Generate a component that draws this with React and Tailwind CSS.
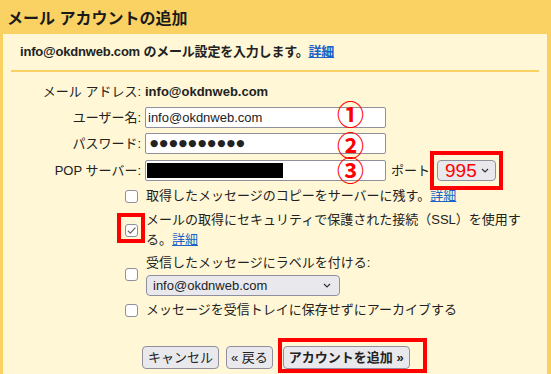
import React from "react";

function Box({ checked }) {
  return (
    <span className="w-[13px] h-[13px] rounded-[3px] border border-[#8f8f9d] bg-white flex items-center justify-center shrink-0">
      {checked && (
        <svg width="11" height="11" viewBox="0 0 11 11">
          <path d="M1.8 5.6 L4.3 8.1 L9.4 2.6" fill="none" stroke="#6b6b6b" strokeWidth="1.3" />
        </svg>
      )}
    </span>
  );
}

function Chevron() {
  return (
    <svg width="8" height="5" viewBox="0 0 8 5" className="shrink-0">
      <path d="M1 1 L4 4 L7 1" fill="none" stroke="#333" strokeWidth="1.2" />
    </svg>
  );
}

function Circled({ children, top }) {
  return (
    <span
      className="absolute left-[191px] text-[27px] font-bold leading-none text-[#ff0000] font-['Noto_Sans_CJK_JP',sans-serif]"
      style={{ top }}
    >
      {children}
    </span>
  );
}

export default function App() {
  return (
    <div className="w-[551px] h-[374px] overflow-hidden bg-[#fad264] text-[#222] text-[13px] font-['Liberation_Sans','Noto_Sans_CJK_JP',sans-serif]">
      <div className="h-[34px] pl-[7px] pt-[3px] flex items-center">
        <h1 className="text-[16px] font-bold text-[#1a1a1a]">メール アカウントの追加</h1>
      </div>
      <div className="ml-[3px] mr-[4px] h-[340px] bg-[#fff7d6]">
        <div className="mx-[8px] pl-[9px] pt-[9px] pb-[9px] border-b-2 border-[#fad264] leading-[18px] font-bold tracking-[-0.2px]">
          info@okdnweb.com のメール設定を入力します。
          <a className="text-[#1a62c7] underline">詳細</a>
        </div>

        <div className="mt-[10px] flex flex-col">
          <div className="flex items-center h-[20px]">
            <div className="w-[138px] text-right">メール アドレス:</div>
            <div className="ml-[4px] font-bold">info@okdnweb.com</div>
          </div>

          <div className="flex items-center mt-[5px]">
            <div className="w-[138px] text-right">ユーザー名:</div>
            <div className="ml-[4px] relative w-[241px] h-[21px] bg-white border border-[#8f8f9d] rounded-[2px] flex items-center pl-[2px]">
              info@okdnweb.com
              <Circled top={-8}>①</Circled>
            </div>
          </div>

          <div className="flex items-center mt-[5px]">
            <div className="w-[138px] text-right">パスワード:</div>
            <div className="ml-[4px] relative w-[241px] h-[21px] bg-white border border-[#8f8f9d] rounded-[2px] flex items-center pl-[4px]">
              <span className="text-[9.5px] tracking-[1.3px] font-['DejaVu_Sans',sans-serif]">●●●●●●●●●●</span>
              <Circled top={-3}>②</Circled>
            </div>
          </div>

          <div className="flex items-center mt-[6px]">
            <div className="w-[138px] text-right">POP サーバー:</div>
            <div className="ml-[4px] relative w-[241px] h-[21px] bg-white border border-[#8f8f9d] rounded-[2px] flex items-center pl-[1px]">
              <div className="w-[136px] h-[15px] bg-black" />
              <Circled top={-5}>③</Circled>
            </div>
            <div className="ml-[5px]">ポート</div>
            <div className="ml-[7px] relative">
              <div className="w-[59px] h-[21px] bg-[#e9e9ed] border border-[#8f8f9d] rounded-[4px] flex items-center pl-[7px] pr-[6px] justify-between">
                <span className="text-[19px] leading-none text-[#ff0000]">995</span>
                <Chevron />
              </div>
              <span className="absolute -left-[7px] -right-[7px] -top-[9px] -bottom-[9px] border-4 border-[#ff0000]" />
            </div>
          </div>

          <div className="flex items-center pl-[122px] mt-[5px] h-[20px]">
            <Box />
            <span className="ml-[8px]">
              取得したメッセージのコピーをサーバーに残す。
              <a className="text-[#1a62c7] underline">詳細</a>
            </span>
          </div>

          <div className="flex items-center pl-[122px] mt-[4px]">
            <span className="relative">
              <Box checked />
              <span className="absolute -left-[8px] -right-[7px] -top-[11px] -bottom-[6px] border-4 border-[#ff0000]" />
            </span>
            <span className="ml-[8px] w-[378px] leading-[20px]">
              メールの取得にセキュリティで保護された接続（SSL）を使用する。
              <a className="text-[#1a62c7] underline">詳細</a>
            </span>
          </div>

          <div className="flex items-center pl-[122px] mt-[3px]">
            <Box />
            <div className="ml-[8px] flex flex-col">
              <span className="leading-[20px]">受信したメッセージにラベルを付ける:</span>
              <div className="mt-[2px] w-[194px] h-[21px] bg-[#e9e9ed] border border-[#8f8f9d] rounded-[4px] flex items-center justify-between pl-[6px] pr-[8px]">
                <span>info@okdnweb.com</span>
                <Chevron />
              </div>
            </div>
          </div>

          <div className="flex items-center pl-[122px] mt-[4px] h-[20px]">
            <Box />
            <span className="ml-[8px]">メッセージを受信トレイに保存せずにアーカイブする</span>
          </div>

          <div className="flex items-center pl-[139px] mt-[26px]">
            <button className="h-[23px] px-[5px] bg-[#e9e9ed] border border-[#8f8f9d] rounded-[4px] text-[#222]">キャンセル</button>
            <button className="ml-[7px] h-[23px] px-[4px] bg-[#e9e9ed] border border-[#8f8f9d] rounded-[4px] text-[#222]">« 戻る</button>
            <span className="ml-[10px] relative">
              <button className="h-[23px] px-[5px] bg-[#e9e9ed] border border-[#8f8f9d] rounded-[4px] font-bold text-[#222]">アカウントを追加 »</button>
              <span className="absolute -left-[5px] -right-[17px] -top-[8px] -bottom-[4px] border-4 border-[#ff0000]" />
            </span>
          </div>
        </div>
      </div>
    </div>
  );
}
